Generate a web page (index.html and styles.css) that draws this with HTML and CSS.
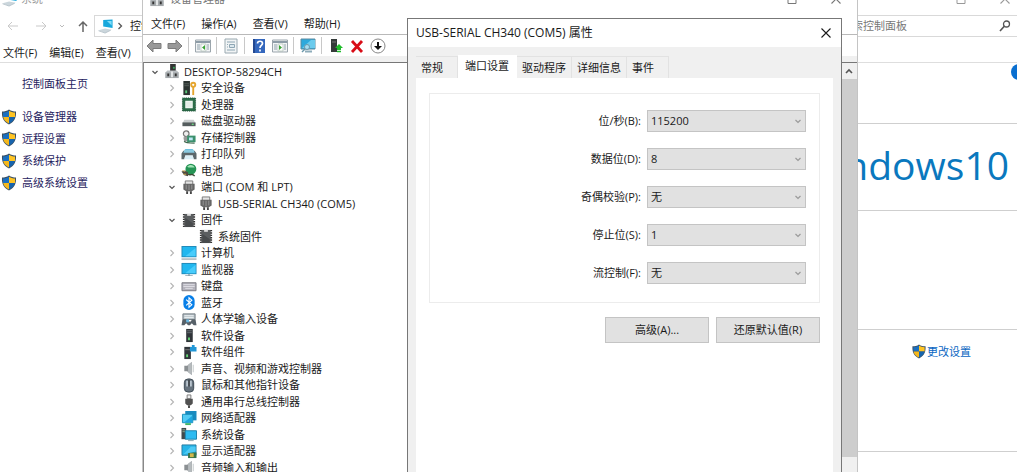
FILE: index.html
```html
<!DOCTYPE html>
<html lang="zh-CN">
<head>
<meta charset="utf-8">
<title>设备管理器</title>
<link rel="stylesheet" href="styles.css">
</head>
<body>
<svg class="sprite" aria-hidden="true">
  <symbol id="right" viewBox="0 0 12 12"><path d="M4.500 3l3 3-3 3" fill="none" stroke="#b4b4b4" stroke-width="1.100"/></symbol>
  <symbol id="down" viewBox="0 0 12 12"><path d="M3.500 5l2.500 2.500L8.500 5" fill="none" stroke="#555" stroke-width="1.200"/></symbol>
  <symbol id="close" viewBox="0 0 12 12"><path d="M1.500 1.500l9 9M10.500 1.500l-9 9" stroke="currentColor" stroke-width="1.100"/></symbol>
  <symbol id="max" viewBox="0 0 12 12"><path d="M2 1.500h8v9H2z" fill="none" stroke="currentColor"/></symbol>
  <symbol id="min" viewBox="0 0 12 12"><path d="M1.500 6.500h9" stroke="currentColor"/></symbol>
  <symbol id="shield" viewBox="0 0 16 16"><path d="M8 .5c2 1.500 4.500 2 7 2 .3 5.500-1 10-7 13C2 12.500.7 8 1 2.500c2.500 0 5-.5 7-2z" fill="#3c5164"/><path d="M8 1.700C6.300 2.800 4.200 3.400 2 3.500V8h6z" fill="#1a6fc0"/><path d="M8 1.700c1.700 1.100 3.800 1.700 6 1.800V8H8z" fill="#ffc423"/><path d="M2.200 8c.5 3 2.500 5 5.800 6.500V8z" fill="#f5b81c"/><path d="M13.800 8c-.5 3-2.500 5-5.800 6.500V8z" fill="#1764ad"/></symbol>
  <symbol id="pc" viewBox="0 0 16 16"><path d="M5 1l10-.5v9L5 8z" fill="#18a8dc"/><path d="M9 2h5v5z" fill="#7fdcf8"/><path d="M0 12l7-2 7 1.500L7 15z" fill="#cbd6dc"/><path d="M0 12.500l7 2.500 6-3" fill="none" stroke="#a9b8c0" stroke-width=".8"/></symbol>
  <symbol id="desk" viewBox="0 0 16 16"><path d="M6 0h6v8H6z" fill="#333"/><path d="M9 3h2v2H9z" fill="#3ba55a"/><path d="M1 9l2-2h10l2 2v6H1z" fill="#b9bec1"/><path d="M1 9h14v6H1z" fill="#a4a9ac"/><path d="M3 10h2v3H3zM11 10h2v3h-2z" fill="#333"/><path d="M7 8h2v6H7z" fill="#e7e9ea"/></symbol>
  <symbol id="key" viewBox="0 0 16 16"><path d="M2 0h7v15H2z" fill="#2c3431"/><path d="M3 3h5M3 5h5" stroke="#58615d"/><path d="M4 10h2v3H4z" fill="#58c878"/><circle cx="12.500" cy="4" r="2.200" fill="none" stroke="#e5a52d" stroke-width="2"/><path d="M12.500 6v9" stroke="#e5a52d" stroke-width="2"/></symbol>
  <symbol id="cpu" viewBox="0 0 16 16"><path d="M1 1h14v14H1z" fill="#2c6c49"/><path d="M4 4h8v8H4z" fill="#f3f8f5"/><path d="M1 1h14v14H1z" fill="none" stroke="#1e5337" stroke-dasharray="1 1"/><path d="M5 5h6v6H5z" fill="#e4eee8"/></symbol>
  <symbol id="disk" viewBox="0 0 16 16"><path d="M3 6h10l2 4H1z" fill="#c9cdce"/><path d="M1 9h14v4H1z" fill="#555d5e"/><path d="M11 11h2" stroke="#68d77e" stroke-width="1.500"/></symbol>
  <symbol id="store" viewBox="0 0 16 16"><circle cx="5" cy="4" r="3" fill="#eee" stroke="#777" stroke-width="1.300"/><path d="M2 8l5-2 1 5-5 2z" fill="#999"/><path d="M6 6h9v7H6z" fill="#3b906d"/><path d="M8 8h4v3H8z" fill="#bce6f5"/><path d="M3 12c1 2 5 2 11 2" stroke="#3f684f" stroke-width="1.500" fill="none"/></symbol>
  <symbol id="printer" viewBox="0 0 16 16"><path d="M4 2h8l1 4H3z" fill="#60bde1"/><path d="M2 4h12l2 3v6h-3l-1-4H4l-1 4H0V7z" fill="#5c676b"/><path d="M3 3h10l1 3H2z" fill="#8ac9df"/><path d="M4 9h8l1 4H3z" fill="#dceff7"/></symbol>
  <symbol id="battery" viewBox="0 0 16 16"><circle cx="10" cy="6.500" r="5.800" fill="#269455"/><path d="M6 4c3-3 7-2 8 1-3-1-5 1-8-1z" fill="#a1e4b5"/><path d="M0 9l4-1 3 2v4l-4-1z" fill="#504b40"/><path d="M7 12c3 2 4-2 7 2" fill="none" stroke="#3a4a34" stroke-width="1.500"/><path d="M1 8l3 1M2 12h3" stroke="#d2b05a"/></symbol>
  <symbol id="port" viewBox="0 0 16 16"><path d="M4 1h8v4H4z" fill="#e4e4e4" stroke="#777"/><path d="M2 4h12v6l-3 2H5l-3-2z" fill="#666"/><path d="M5 5v5M8 5v6M11 5v5" stroke="#999"/><path d="M5 12h2v3H5zM9 12h2v3H9z" fill="#444"/></symbol>
  <symbol id="chip" viewBox="0 0 16 16"><path d="M3 1h10v14H3z" fill="#5b5e60"/><path d="M2.500 1v14M13.500 1v14" stroke="#333" stroke-width="2" stroke-dasharray="1.500 1"/><path d="M6 1h4v2H6z" fill="#ddd"/><path d="M4 5l8 6v4H4z" fill="#484b4d"/></symbol>
  <symbol id="monitor" viewBox="0 0 16 16"><path d="M0 1h16v12H0z" fill="#2389b7"/><path d="M1 2h14v10H1z" fill="#21b7ef"/><path d="M4 12L15 3v9z" fill="#48ccfb"/><path d="M7 13h2v1H7zM4 14h8v1H4z" fill="#8aa3ae"/></symbol>
  <symbol id="computer" viewBox="0 0 16 16"><path d="M0 0h16v12H0z" fill="#2389b7"/><path d="M1 1h14v10H1z" fill="#21b7ef"/><path d="M4 11l11-9v9z" fill="#48ccfb"/><path d="M0 13h16v2H0z" fill="#b8c1c6"/></symbol>
  <symbol id="keyboard" viewBox="0 0 16 16"><path d="M.5 4h15v8.500H.5z" fill="#b5b4bd" stroke="#777781"/><path d="M2 6h12M2 8h12M4 10h8" stroke="#dfdfe5"/></symbol>
  <symbol id="bt" viewBox="0 0 16 16"><rect x="2" y="0" width="12" height="16" rx="6" fill="#087fe8"/><path d="M5 5l6 5.500L8 13V3l3 2.500L5 11" fill="none" stroke="#fff" stroke-width="1.200"/></symbol>
  <symbol id="hid" viewBox="0 0 16 16"><path d="M1.500 2h13v6h-13z" fill="#b5bfc5" stroke="#6f7a80"/><path d="M3 4h10M3 6h10" stroke="#f1f5f7"/><path d="M0 14l1-6h4l1 2h4l1-2h4l1 6h-3l-2-2-2 2H7l-2-2-2 2z" fill="#576169"/><path d="M5 8h3v3H5z" fill="#66b6e1"/></symbol>
  <symbol id="soft" viewBox="0 0 16 16"><path d="M5 1h7v14H5z" fill="#30353a"/><path d="M6 3h5M6 5h5" stroke="#6d7377"/><path d="M7 10h2v3H7z" fill="#66d675"/></symbol>
  <symbol id="comp" viewBox="0 0 16 16"><path d="M3 2h7v13H3z" fill="#30353a"/><path d="M4 5h5" stroke="#777"/><path d="M5 10h2v3H5z" fill="#66d675"/><path d="M9 2h2V0h3v2h2v5H9z" fill="#2196d6"/></symbol>
  <symbol id="sound" viewBox="0 0 16 16"><path d="M3 5h3l5-4v14l-5-4H3z" fill="#8b9093"/><path d="M7 4l4-3v14l-4-3z" fill="#b5babd"/><path d="M12.500 4v8" stroke="#bfc5c9"/></symbol>
  <symbol id="mouse" viewBox="0 0 16 16"><rect x="3" y="1" width="10" height="14" rx="4" fill="#66727d" stroke="#394550"/><path d="M5 3h2v6H5zM9 3h2v6H9z" fill="#b9c5cf"/><path d="M8 2v7" stroke="#222"/></symbol>
  <symbol id="usb" viewBox="0 0 16 16"><path d="M6 1h4v4H6z" fill="#eee" stroke="#777"/><path d="M4 5h8v5l-2 2H6l-2-2z" fill="#515151"/><path d="M8 12v3" stroke="#444" stroke-width="2"/></symbol>
  <symbol id="net" viewBox="0 0 16 16"><path d="M4 0h12v10H4z" fill="#198abf"/><path d="M1 3.500h11v9H1z" fill="#51cbf4" stroke="#168db9"/><path d="M4 13h6v2H4z" fill="#3db466"/><path d="M3 12l8.500-7v7z" fill="#1da5e0"/></symbol>
  <symbol id="system" viewBox="0 0 16 16"><path d="M0 1h5v12H0z" fill="#41494c"/><path d="M1 3h3M1 5h3" stroke="#8eac8e"/><path d="M4 4h12v9H4z" fill="#2dbbf1" stroke="#1c81aa"/><path d="M7 14.500h6" stroke="#8da3ad"/></symbol>
  <symbol id="display" viewBox="0 0 16 16"><path d="M.5 1h15v11H.5z" fill="#27b5e8" stroke="#257a9f"/><path d="M7 9h9v6H7z" fill="#36744a"/><path d="M9 10h4v4H9z" fill="#d3b84d"/><path d="M2 11l8-8h5v5z" fill="#4fcaf5"/></symbol>
  <symbol id="panel" viewBox="0 0 16 16"><path d="M.5 2h15v12H.5z" fill="#f2f4f5" stroke="#9ba5ac"/><path d="M1 3h14v2H1z" fill="#8d9ca7"/><path d="M2 7h3M2 9h3M2 11h3M12 7h2M12 9h2M12 11h2" stroke="#8fa1ab"/><path d="M6 6h5v7H6z" fill="#fff" stroke="#a6b8ab" stroke-width=".6"/></symbol>
</svg>
<div class="desktop">
  <section class="window system" aria-label="系统">
    <header class="titlebar"><svg class="icon"><use href="#pc"/></svg><span class="title">系统</span>
      <div class="controls"><button aria-label="最小化"><svg class="glyph"><use href="#min"/></svg></button><button aria-label="最大化"><svg class="glyph"><use href="#max"/></svg></button><button aria-label="关闭"><svg class="glyph"><use href="#close"/></svg></button></div></header>
    <div class="navigation">
      <div class="arrows">
        <button class="back" aria-label="后退"><svg viewBox="0 0 14 14"><path d="M12 7H2M6 3L2 7l4 4" stroke="#c9c9c9"/></svg></button>
        <button aria-label="前进"><svg viewBox="0 0 14 14"><path d="M2 7h10M8 3l4 4-4 4" stroke="#c9c9c9"/></svg></button>
        <button aria-label="最近"><svg viewBox="0 0 14 14"><path d="M5 6l2 2 2-2" stroke="#bbb"/></svg></button>
        <button aria-label="上移"><svg viewBox="0 0 14 14"><path d="M7 13V3M3 7l4-4 4 4" stroke="#666" stroke-width="1.500"/></svg></button>
      </div>
      <div class="address"><svg class="icon"><use href="#pc"/></svg><svg class="crumb" viewBox="0 0 12 12"><path d="M4.500 3l3 3-3 3" fill="none" stroke="#555" stroke-width="1.300"/></svg><span>控制面板</span></div>
      <div class="search"><input type="text" aria-label="搜索控制面板" placeholder="搜索控制面板"><svg viewBox="0 0 14 14"><circle cx="8.500" cy="5" r="3" fill="none" stroke="#555" stroke-width="1.300"/><path d="M6.500 7L2 12" stroke="#555" stroke-width="1.600"/></svg></div>
    </div>
    <nav class="menu"><button>文件(F)</button><button>编辑(E)</button><button>查看(V)</button></nav>
    <div class="content">
      <aside class="sidebar">
        <a class="home" href="#home">控制面板主页</a>
        <a href="#devices"><svg class="icon"><use href="#shield"/></svg>设备管理器</a>
        <a href="#remote"><svg class="icon"><use href="#shield"/></svg>远程设置</a>
        <a href="#protect"><svg class="icon"><use href="#shield"/></svg>系统保护</a>
        <a href="#advanced"><svg class="icon"><use href="#shield"/></svg>高级系统设置</a>
      </aside>
      <main class="info">
        <div class="band heading"><button class="help" aria-label="帮助"></button></div>
        <div class="band brand"><span>Windows</span><span>10</span></div>
        <div class="band specs"></div>
        <div class="band change"><a href="#change"><svg class="icon"><use href="#shield"/></svg>更改设置</a></div>
        <div class="band"></div>
      </main>
    </div>
  </section>

  <section class="window manager" aria-label="设备管理器">
    <header class="titlebar"><svg class="icon"><use href="#desk"/></svg><span class="title">设备管理器</span>
      <div class="controls"><button aria-label="最小化"><svg class="glyph"><use href="#min"/></svg></button><button aria-label="最大化"><svg class="glyph"><use href="#max"/></svg></button><button aria-label="关闭"><svg class="glyph"><use href="#close"/></svg></button></div></header>
    <nav class="menu"><button>文件(F)</button><button>操作(A)</button><button>查看(V)</button><button>帮助(H)</button></nav>
    <div class="toolbar">
      <button aria-label="后退"><svg viewBox="0 0 16 16"><path d="M1 8l6-6v3.500h8v5H7V14z" fill="#999" stroke="#7c7c7c"/></svg></button>
      <button aria-label="前进"><svg viewBox="0 0 16 16"><path d="M15 8L9 2v3.500H1v5h8V14z" fill="#999" stroke="#7c7c7c"/></svg></button>
      <span class="divider"></span>
      <button aria-label="显示控制台树"><svg viewBox="0 0 16 16"><use href="#panel"/><path d="M10 7v5L7 9.500z" fill="#39a335"/></svg></button>
      <span class="divider"></span>
      <button aria-label="属性"><svg viewBox="0 0 16 16"><path d="M2 1h12v14H2z" fill="#f1f4f5" stroke="#9aa9b1"/><path d="M4 4h8M4 12h8M4 6.500h1M4 9h1" stroke="#8ea6b4"/><path d="M6.500 6.500h5v3h-5z" fill="#dce8ee" stroke="#8ea6b4"/></svg></button>
      <span class="divider"></span>
      <button aria-label="帮助"><svg viewBox="0 0 16 16"><path d="M2 1h12v14H2z" fill="#3467bd"/><path d="M2 1h2v14H2z" fill="#244890"/><path d="M6.500 5.500c0-3 5-3 5 0 0 2-2.500 2-2.500 4.500M9 11.500v2" fill="none" stroke="#fff" stroke-width="1.700"/></svg></button>
      <button aria-label="操作窗格"><svg viewBox="0 0 16 16"><use href="#panel"/><path d="M7 7v5l3-2.500z" fill="#39a335"/></svg></button>
      <span class="divider"></span>
      <button aria-label="扫描硬件"><svg viewBox="0 0 16 16"><path d="M1 1h14v10H1z" fill="#2da9dc" stroke="#5d8ba0"/><path d="M2 10l9-8h4v8z" fill="#6bcbed"/><path d="M5 13.500h7" stroke="#8eacba" stroke-width="2"/><circle cx="7" cy="9" r="2.500" fill="#a5def2" stroke="#6b97aa"/><path d="M5 11l-3 3" stroke="#6b97aa" stroke-width="1.500"/></svg></button>
      <span class="divider"></span>
      <button aria-label="更新驱动"><svg viewBox="0 0 16 16"><path d="M3 1h6v13H3z" fill="#343a39"/><path d="M4 4h4" stroke="#777"/><path d="M11 6l4 4h-2v2H9v-2H7z" fill="#20bd2c"/><path d="M9 13.500h4" stroke="#20bd2c" stroke-width="1.500"/></svg></button>
      <button aria-label="卸载设备"><svg viewBox="0 0 16 16"><path d="M3 3l10 11M13 3L3 14" stroke="#d80d17" stroke-width="2.800"/></svg></button>
      <button aria-label="禁用设备"><svg viewBox="0 0 16 16"><circle cx="8" cy="8" r="7" fill="#fff" stroke="#888"/><path d="M7 4h2v4h3l-4 4-4-4h3z" fill="#111"/></svg></button>
    </div>
    <div class="workspace">
      <ul class="tree" role="tree">
        <li class="root" role="treeitem"><svg class="twist"><use href="#down"/></svg><svg class="icon"><use href="#desk"/></svg>DESKTOP-58294CH</li>
        <li role="treeitem"><svg class="twist"><use href="#right"/></svg><svg class="icon"><use href="#key"/></svg>安全设备</li>
        <li role="treeitem"><svg class="twist"><use href="#right"/></svg><svg class="icon"><use href="#cpu"/></svg>处理器</li>
        <li role="treeitem"><svg class="twist"><use href="#right"/></svg><svg class="icon"><use href="#disk"/></svg>磁盘驱动器</li>
        <li role="treeitem"><svg class="twist"><use href="#right"/></svg><svg class="icon"><use href="#store"/></svg>存储控制器</li>
        <li role="treeitem"><svg class="twist"><use href="#right"/></svg><svg class="icon"><use href="#printer"/></svg>打印队列</li>
        <li role="treeitem"><svg class="twist"><use href="#right"/></svg><svg class="icon"><use href="#battery"/></svg>电池</li>
        <li role="treeitem"><svg class="twist"><use href="#down"/></svg><svg class="icon"><use href="#port"/></svg>端口 (COM 和 LPT)</li>
        <li class="leaf" role="treeitem"><svg class="icon"><use href="#port"/></svg>USB-SERIAL CH340 (COM5)</li>
        <li role="treeitem"><svg class="twist"><use href="#down"/></svg><svg class="icon"><use href="#chip"/></svg>固件</li>
        <li class="leaf" role="treeitem"><svg class="icon"><use href="#chip"/></svg>系统固件</li>
        <li role="treeitem"><svg class="twist"><use href="#right"/></svg><svg class="icon"><use href="#computer"/></svg>计算机</li>
        <li role="treeitem"><svg class="twist"><use href="#right"/></svg><svg class="icon"><use href="#monitor"/></svg>监视器</li>
        <li role="treeitem"><svg class="twist"><use href="#right"/></svg><svg class="icon"><use href="#keyboard"/></svg>键盘</li>
        <li role="treeitem"><svg class="twist"><use href="#right"/></svg><svg class="icon"><use href="#bt"/></svg>蓝牙</li>
        <li role="treeitem"><svg class="twist"><use href="#right"/></svg><svg class="icon"><use href="#hid"/></svg>人体学输入设备</li>
        <li role="treeitem"><svg class="twist"><use href="#right"/></svg><svg class="icon"><use href="#soft"/></svg>软件设备</li>
        <li role="treeitem"><svg class="twist"><use href="#right"/></svg><svg class="icon"><use href="#comp"/></svg>软件组件</li>
        <li role="treeitem"><svg class="twist"><use href="#right"/></svg><svg class="icon"><use href="#sound"/></svg>声音、视频和游戏控制器</li>
        <li role="treeitem"><svg class="twist"><use href="#right"/></svg><svg class="icon"><use href="#mouse"/></svg>鼠标和其他指针设备</li>
        <li role="treeitem"><svg class="twist"><use href="#right"/></svg><svg class="icon"><use href="#usb"/></svg>通用串行总线控制器</li>
        <li role="treeitem"><svg class="twist"><use href="#right"/></svg><svg class="icon"><use href="#net"/></svg>网络适配器</li>
        <li role="treeitem"><svg class="twist"><use href="#right"/></svg><svg class="icon"><use href="#system"/></svg>系统设备</li>
        <li role="treeitem"><svg class="twist"><use href="#right"/></svg><svg class="icon"><use href="#display"/></svg>显示适配器</li>
        <li role="treeitem"><svg class="twist"><use href="#right"/></svg><svg class="icon"><use href="#sound"/></svg>音频输入和输出</li>
      </ul>
      <div class="scrollbar"><svg viewBox="0 0 14 16"><path d="M4 10l3-3 3 3" fill="none" stroke="#555" stroke-width="1.600"/></svg><div class="thumb"></div></div>
    </div>
  </section>

  <section class="dialog" role="dialog" aria-label="USB-SERIAL CH340 (COM5) 属性">
    <header class="caption"><span>USB-SERIAL CH340 (COM5) 属性</span><button aria-label="关闭"><svg class="glyph"><use href="#close"/></svg></button></header>
    <div class="body">
      <div class="tabs" role="tablist"><button role="tab">常规</button><button role="tab" class="active" aria-selected="true">端口设置</button><button role="tab">驱动程序</button><button role="tab">详细信息</button><button role="tab">事件</button></div>
      <form class="page">
        <div class="group">
          <div class="field"><label for="baud">位/秒(B):</label><div class="combo"><select id="baud"><option>115200</option></select><svg class="glyph"><use href="#down"/></svg></div></div>
          <div class="field"><label for="bits">数据位(D):</label><div class="combo"><select id="bits"><option>8</option></select><svg class="glyph"><use href="#down"/></svg></div></div>
          <div class="field"><label for="parity">奇偶校验(P):</label><div class="combo"><select id="parity"><option>无</option></select><svg class="glyph"><use href="#down"/></svg></div></div>
          <div class="field"><label for="stop">停止位(S):</label><div class="combo"><select id="stop"><option>1</option></select><svg class="glyph"><use href="#down"/></svg></div></div>
          <div class="field"><label for="flow">流控制(F):</label><div class="combo"><select id="flow"><option>无</option></select><svg class="glyph"><use href="#down"/></svg></div></div>
        </div>
        <div class="actions"><button type="button">高级(A)...</button><button type="button">还原默认值(R)</button></div>
      </form>
    </div>
  </section>
</div>
</body>
</html>
```

FILE: styles.css
```css
* { box-sizing: border-box; }
body {
  margin: 0;
  font-family: "Open Sans", "Noto Sans CJK SC", sans-serif;
  font-size: 11px;
  line-height: 16px;
  color: #1a1a1a;
  background: #fff;
}
button, input, select { font: inherit; color: inherit; }
button { padding: 0; border: 0; background: none; }
a { color: inherit; text-decoration: none; }
svg { display: block; flex: none; }
.sprite { position: absolute; width: 0; height: 0; }
.icon { width: 16px; height: 15px; }
.glyph { width: 12px; height: 12px; }

.desktop { position: relative; height: 100vh; overflow: hidden; }
.window, .dialog { position: absolute; display: flex; flex-direction: column; background: #fff; }
.titlebar { display: flex; align-items: center; flex: none; color: #777; }
.controls { display: flex; gap: 32px; margin-left: auto; }
.menu { display: flex; flex: none; }
.menu button { white-space: nowrap; }

/* System window */
.system { inset: -17px 0 0; }
.system .titlebar { height: 32px; gap: 3px; padding: 0 6px 0 2px; color: #999; }
.navigation { display: flex; flex: none; height: 22px; }
.arrows { display: flex; align-items: center; gap: 7px; padding: 0 4px 0 6px; }
.arrows .back { margin-right: 7px; }
.arrows svg { width: 14px; height: 14px; fill: none; }
.address { display: flex; flex: 1; align-items: center; border: 1px solid #d9d9d9; padding-left: 3px; }
.crumb { width: 12px; height: 12px; margin: 0 4px 0 0; }
.search { display: flex; align-items: center; width: 185px; border: 1px solid #d9d9d9; border-right: 0; margin-left: 10px; padding-right: 5px; }
.search input { flex: 1; min-width: 0; border: 0; outline: 0; padding: 0 8px; background: none; }
.search input::placeholder { color: #777; opacity: 1; }
.search svg { width: 14px; height: 14px; }
.system .menu { height: 26px; gap: 12px; padding: 7px 3px 0; border-bottom: 1px solid #dedede; }
.content { display: flex; flex: 1; min-height: 0; }
.sidebar { display: flex; flex-direction: column; gap: 6px; width: 170px; padding: 13px 1px; color: #1f2360; }
.sidebar a { display: flex; align-items: center; gap: 5px; }
.sidebar .icon { height: 16px; }
.sidebar .home { padding-left: 21px; margin-bottom: 11px; }
.info { flex: 1; min-width: 0; overflow: hidden; }
.band { height: 122px; border-bottom: 1px solid #cfcfcf; }
.heading { display: flex; justify-content: flex-end; height: 61px; }
.help { width: 16px; height: 16px; margin: 1px -10px 0 0; border-radius: 50%; background: #0a6fd0; }
.brand {
  display: flex;
  align-items: center;
  justify-content: flex-end;
  height: 87px;
  padding: 0 8px 5px;
  font-size: 39px;
  line-height: 48px;
  color: #0a78be;
}
.specs { height: 119px; }
.change { padding: 14px 46px 0 0; color: #0a66c2; }
.change a { display: flex; justify-content: flex-end; }

/* Device manager window */
.manager { inset: -16px 159px 0 142px; border-left: 1px solid #c4c4c4; border-right: 1px solid #c4c4c4; }
.manager .titlebar { height: 30px; gap: 5px; padding: 0 15px 0 6px; }
.manager .menu { height: 21px; gap: 16px; padding: 2px 8px; border-bottom: 1px solid #b9b9b9; }
.toolbar { display: flex; flex: none; align-items: center; gap: 5px; height: 21px; padding-left: 3px; }
.toolbar svg { width: 16px; height: 16px; }
.divider { width: 1px; height: 17px; margin-right: 1px; background: #c8c8c8; }
.workspace { display: flex; flex: 1; min-height: 0; border-top: 6px solid #f0f0f0; }
.tree { flex: 1; min-width: 0; margin: 0; padding: 0; overflow: hidden; list-style: none; border-top: 1px solid #777; border-left: 1px solid #888; }
.tree li { display: flex; align-items: center; height: 16px; padding-left: 22px; white-space: nowrap; }
.tree li:nth-child(odd) { height: 17px; }
.tree .root { padding-left: 5px; }
.tree .leaf { padding-left: 54px; }
.twist { width: 12px; height: 12px; margin-right: 3px; }
.tree .icon { margin-right: 4px; }
.scrollbar { width: 15px; padding-bottom: 15px; display: flex; flex-direction: column; background: #f0f0f0; border-top: 1px solid #777; }
.scrollbar svg { width: 14px; height: 16px; }
.thumb { flex: 1; background: #cdcdcd; }

/* Port properties dialog */
.dialog { inset: 18px 175px -40px 407px; border: 1px solid #777; }
.caption { display: flex; flex: none; align-items: center; justify-content: space-between; height: 28px; padding: 0 9px 0 8px; font-size: 12px; }
.body { display: flex; flex: 1; flex-direction: column; padding: 8px 8px 0; background: #f0f0f0; }
.tabs { display: flex; align-items: flex-end; height: 23px; }
.tabs button { height: 22px; padding: 0 5px; border: 1px solid #e2e2e2; border-width: 1px 1px 0 0; white-space: nowrap; }
.tabs button:first-child, .tabs button:last-child { padding-right: 14px; }
.tabs .active { height: 23px; padding: 0 7px 3px; background: #fff; border-color: #fff; }
.page { flex: 1; padding: 15px 13px; background: #fff; }
.group { display: flex; flex-direction: column; gap: 16px; padding: 16px 13px 18px; border: 1px solid #ececec; }
.field { display: flex; align-items: center; justify-content: flex-end; gap: 6px; }
.combo { display: grid; align-items: center; width: 159px; }
.combo > * { grid-area: 1 / 1; }
.combo select { width: 100%; height: 22px; padding: 0 4px 1px 3px; border: 1px solid #c4c4c4; border-radius: 0; appearance: none; background: #e1e1e1; }
.combo .glyph { justify-self: end; margin-right: 2px; opacity: .5; pointer-events: none; }
.actions { display: flex; justify-content: flex-end; gap: 7px; padding-top: 14px; }
.actions button { width: 104px; height: 26px; background: #e1e1e1; border: 1px solid #c4c4c4; }
```
